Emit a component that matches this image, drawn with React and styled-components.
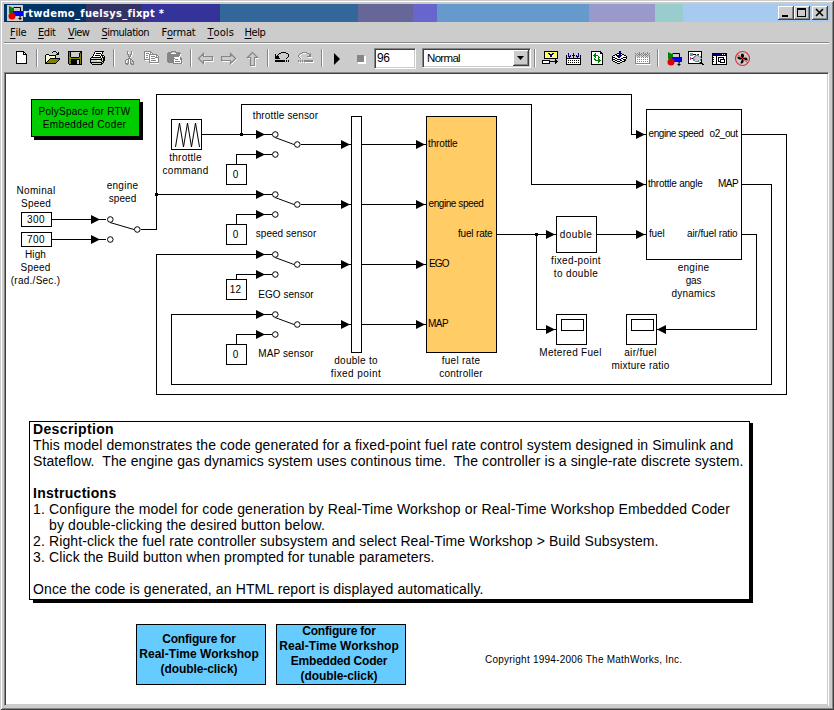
import React from "react";
import styled, { createGlobalStyle, css } from "styled-components";

const SANS = '"Liberation Sans", Arial, sans-serif';
const UI = '"DejaVu Sans Condensed", "DejaVu Sans", sans-serif';

const GlobalStyle = createGlobalStyle`
  html, body { margin: 0; padding: 0; background: #ccc; }
  body { width: 834px; height: 710px; overflow: hidden; color: #000; }
  * { box-sizing: border-box; }
`;

/* Letter spacing that makes a line of text take the given width. */
const ruler = document.createElement("canvas").getContext("2d");
function tracking(text, font, width) {
  if (!width) return 0;
  ruler.font = font;
  return (width - ruler.measureText(text).width) / text.length;
}

const Glyphs = styled.span`
  display: block;
  white-space: pre;
  font: ${(p) => p.$font};
  line-height: inherit;
  letter-spacing: ${(p) => p.$track}px;
`;

function Line({ children, w, size = 10, bold, family = SANS }) {
  const font = `${bold ? "bold " : ""}${size}px ${family}`;
  return (
    <Glyphs $font={font} $track={tracking(children, font, w)}>
      {children}
    </Glyphs>
  );
}

/* ---------- window frame ---------- */

const Window = styled.div`
  width: 834px;
  height: 710px;
  display: flex;
  flex-direction: column;
  background: #ccc;
  padding: 2px;
  box-shadow: inset 1px 1px #ccc, inset -1px -1px #404040, inset 2px 2px #fff, inset -2px -2px #868686;
`;

const TitleBar = styled.header`
  height: 18px;
  margin: 2px 2px 0 2px;
  display: flex;
  align-items: center;
  padding: 0 2px 0 3px;
  background: linear-gradient(
    90deg,
    #003366 0 82px,
    #333366 82px 138px,
    #333399 138px 216px,
    #336699 216px 354px,
    #666699 354px 409px,
    #6666cc 409px 433px,
    #6699cc 433px 585px,
    #9999cc 585px 651px,
    #99cccc 651px 679px,
    #a6caf0 679px
  );
`;

const Title = styled.h1`
  flex: 1;
  margin: 1px 0 0;
  color: #fff;
  line-height: 16px;
`;

const WinButton = styled.button`
  width: 16px;
  height: 14px;
  padding: 0;
  border: 0;
  margin-left: ${(p) => (p.$gap ? 2 : 0)}px;
  background: #ccc;
  box-shadow: inset -1px -1px #404040, inset 1px 1px #fff, inset -2px -2px #868686;
  display: flex;
`;

const MenuBar = styled.nav`
  height: 20px;
  display: flex;
  gap: 12.5px;
  padding: 4px 0 0 8px;
  line-height: 14px;
`;

const MenuItem = styled.span`
  display: flex;
  width: ${(p) => p.$w}px;
  font: 11px ${UI};
  line-height: 14px;
  white-space: pre;
  letter-spacing: ${(p) => p.$track}px;
  u { text-underline-offset: 2px; text-decoration-thickness: 1px; }
`;

const ToolBar = styled.div`
  height: 30px;
  margin: 0 3px 0 2px;
  border-top: 1px solid #868686;
  box-shadow: inset 0 1px #fff;
  padding: 6px 0 0 6px;
  display: flex;
`;

const Slot = styled.svg`
  width: 23px;
  height: 20px;
  flex: none;
  display: block;
`;

const Separator = styled.div`
  width: 2px;
  height: 18px;
  margin: 0 3px;
  flex: none;
  border-left: 1px solid #868686;
  border-right: 1px solid #fff;
`;

const sunken = css`
  background: #fff;
  border: 1px solid;
  border-color: #868686 #fff #fff #868686;
  box-shadow: inset 1px 1px #404040, inset -1px -1px #ccc;
`;

const Field = styled.div`
  ${sunken}
  width: 42px;
  height: 21px;
  margin: -1px 6px 0 2px;
  padding: 2px 0 0 2px;
  line-height: 14px;
`;

const Select = styled.div`
  ${sunken}
  width: 109px;
  height: 20px;
  margin-top: -1px;
  padding: 1px 1px 1px 4px;
  display: flex;
  justify-content: space-between;
  line-height: 17px;
`;

const DropButton = styled.svg`
  width: 16px;
  height: 16px;
  background: #ccc;
  box-shadow: inset -1px -1px #404040, inset 1px 1px #fff, inset -2px -2px #868686;
`;

/* ---------- model canvas ---------- */

const Canvas = styled.main`
  position: relative;
  flex: 1;
  margin: 0 3px 2px 2px;
  background: #fff;
  border: 1px solid;
  border-color: #868686 #fff #ccc #868686;
  box-shadow: inset 1px 1px #404040, inset -1px -1px #ccc;
`;

/* Model coordinates are those of the window. */
const Model = styled.div`
  position: absolute;
  left: -5px;
  top: -73px;
  width: 834px;
  height: 710px;
`;

const Wires = styled.svg`
  position: absolute;
  left: 0;
  top: 0;
  width: 834px;
  height: 710px;
  fill: none;
  stroke: #000;
`;

const Block = styled.div`
  position: absolute;
  left: ${(p) => p.$x}px;
  top: ${(p) => p.$y}px;
  width: ${(p) => p.$w}px;
  height: ${(p) => p.$h}px;
  border: 1px solid #000;
  background: ${(p) => p.$fill || "#fff"};
  display: flex;
  flex-direction: column;
  align-items: center;
  justify-content: center;
  padding-right: ${(p) => p.$inset || 0}px;
  padding-bottom: ${(p) => p.$lift || 0}px;
  line-height: ${(p) => p.$leading || 13}px;
  ${(p) => p.$shadow && css`box-shadow: 3px 3px #000;`}
`;

const BlockIcon = styled.svg`
  width: 28px;
  height: 28px;
  display: block;
`;

const Label = styled.div`
  position: absolute;
  left: ${(p) => p.$x}px;
  top: ${(p) => p.$base - 10}px;
  transform: ${(p) => (p.$centered ? "translateX(-50%)" : "none")};
  line-height: 13px;
  display: flex;
  flex-direction: column;
  align-items: center;
`;

const Note = styled.section`
  position: absolute;
  left: 29px;
  top: 421px;
  width: 721px;
  height: 179px;
  border: 1px solid #000;
  background: #fff;
  line-height: 16px;
  &::before {
    content: "";
    position: absolute;
    z-index: -1;
    left: 3px;
    top: 1px;
    width: 720px;
    height: 180px;
    background: #000;
  }
`;

const NoteText = styled.div`
  margin-top: -1px;
  height: 178px;
  padding-left: 3px;
`;

const NoteFace = styled.div`
  position: absolute;
  z-index: -1;
  inset: 0;
  background: #fff;
`;

const NoteLayer = styled.div`
  position: relative;
  z-index: 0;
`;

const Blank = styled.div`
  height: 16px;
`;

const Step = styled.div`
  display: grid;
  grid-template-columns: 16px auto;
`;

/* ---------- toolbar drawings ---------- */

const COLORS = {
  k: "#000", w: "#fff", g: "#868686", y: "#ffff66", o: "#808000", b: "#000080",
  B: "#0000ff", G: "#008000", r: "#ff0000", c: "#ccc", m: "#ff00ff", t: "#669999", l: "#ffffcc",
};

function Pixels({ rows, x, y }) {
  const paths = {};
  rows.forEach((row, j) => {
    let i = 0;
    while (i < row.length) {
      const ch = row[i];
      let n = 1;
      while (row[i + n] === ch) n += 1;
      if (ch !== ".") paths[ch] = `${paths[ch] || ""}M${x + i} ${y + j}h${n}v1h-${n}z`;
      i += n;
    }
  });
  return Object.keys(paths).map((ch) => <path key={ch} fill={COLORS[ch]} d={paths[ch]} />);
}

const ART = {
  new: [6, 2, [
    "kkkkkkkk...", "kwwwwwwkk..", "kwwwwwwkwk.", "kwwwwwwkkkk", "kwwwwwwwwwk", "kwwwwwwwwwk", "kwwwwwwwwwk",
    "kwwwwwwwwwk", "kwwwwwwwwwk", "kwwwwwwwwwk", "kwwwwwwwwwk", "kwwwwwwwwwk", "kkkkkkkkkkk"]],
  open: [3, 2, [
    ".........kkk....", "........k...k.k.", ".............kk.", "..kkk.......kkk.", ".kylykkkkkkk....", ".klylylylylk....",
    ".kylylylylyk....", ".klylykkkkkkkkkk", ".kylykoooooooook", ".klykoooooooook.", ".kykoooooooook..",
    ".kkoooooooook...", ".kkkkkkkkkkk...."]],
  save: [4, 2, [
    "kkkkkkkkkkkkkk", "kokccccccccckk", "kokcccccccckok", "kokcccccccckok", "kokcccccccckok", "kokcccccccckok", "kookkkkkkkkook",
    "kooooooooooook", "kookkkkkkkkkok", "kookkkkkkcckok", "kookkkkkkcckok", "kookkkkkkcckok", "kookkkkkkcckok", ".kkkkkkkkkkkkk"]],
  print: [3, 2, [
    ".....kkkkkkkkk.", "....kwwwwwwwk..", "....kwkkkkkwk..", "...kwwwwwwwk...", "...kwkkkkkwkkk.", "..kwwwwwwwkwkwk", ".kkkkkkkkkkwkkk",
    "kcccccccccckckk", "kkkkkkkkkkkkckk", "kccccccyyyckckk", "kccccccccccckk.", "kkkkkkkkkkkkck.", ".kccccccccckk..", "..kkkkkkkkkk..."]],
  cut: [7, 2, [
    "..g...g..", "..gw..gw.", "..gw..gw.", "..gg.ggw.", "...g.gw..", "...gggw..", "....gw...", "...ggg...",
    ".gggwgg..", "g.wgwg.g.", "gw.gwg.gg", "gw.gwg..g", "ggggwgg.g", ".gg...ggg"]],
  copy: [3, 2, [
    "ggggggg........", "gwwwwwgg.......", "gwgggwgwg......", "gwwwwgggggggg..", "gwggwgwwwwwwgg.", "gwwwwgwggggwgwg", "gwggwgwwwwwgggg",
    "gwwwwgwggggwwwg", "ggggggwwwwwwwwg", ".wwwwgwgggggwwg", ".....gwwwwwwwwg", ".....gggggggggg", "......wwwwwwwww"]],
  paste: [3, 2, [
    "....ggggg......", ".gggg...ggggg..", "ggggwwwwwggggg.", "gggggggggggggw.", "gggggggggggggw.", "ggggggggggggw..", "gggggggwwwwwwg.",
    "ggggggggwwwwwgg", "gggggggwgggwwgg", "gggggggwwwwwwwg", "gggggggwgggggwg", ".ggggggwwwwwwwg", "......gggggggggw"]],
  undo: [3, 3, [
    "......kkkkk...", "....kk.....kk.", "k..k.........k", "k.k..........k", "kkkk.........k", "kkkk........k.", "kkkkk......k..", "..............", "kkkkkkkkkk.k.k", "kkkkkkkkkk.k.k"]],
  redo: [3, 3, [
    "....ggggg......", "..gg.www.gg.g..", ".g.w.......gg..", "g.w........gg..", "gw.......gggg..", ".gw.......wwww.", "..gw...........", "...............", "g.g.g.ggggggggg", "g.g.g.gggggggggw", ".w.w.w.wwwwwwwww"]],
  library: [3, 2, [
    "..kkkkkkkkkkkkkk", "..kyyyyyyyyyyyyk", "..kyyybbyybbyyyk", "..kyyyybbbbyyyyk", "..kyyyyybbyyyyyk", "..kyyyyybbyyyyyk", "..kyyyyyyyyyyyyk",
    "..kkkkkkkkkkkkkk", ".............k..", "kkkkkkkk.....kk.", "kwwwwwwkkkkkkkkk", "kwwwwwwk.....kk.", "kkkkkkkk.....k.."]],
  build: [4, 4, [
    "..b....b....b..", "..b....b....b..", "k.b.b.bbb.b.b.k", "k.bbb..b..bbb.k", "k..b...b...b..k", "kkkkkkkkkkkkkkk", "kwwwwwwwwwwwwwk",
    "kwkwkwkwkwkwkwk", "kwwwwwwwwwwwwwk", "kwkwkwkwkwkwkwk", "kwwwwwwwwwwwwwk", "kkkkkkkkkkkkkkk"]],
  buildOff: [4, 3, [
    "c.c.g.c.g.c.g.c", "g.g.g.g.g.g.g.g", ".g.ggg.g.ggg.g.", "g.g.g.g.g.g.g.g", "g..g...g...g..g", "gwgwgwgwgwgwgwg", "gwwwwwwwwwwwwwg",
    "gwgwgwgwgwgwgwg", "gwwwwwwwwwwwwwg", "gwgwgwgwgwgwgwg", "gwwwwwwwwwwwwwg", "ggggggggggggggg", ".wwwwwwwwwwwwwww"]],
  refresh: [6, 2, [
    "kkkkkkkkkk..", "kwwwwwwwwkk.", "kwwwGwwwwkkk", "kwwGGwwwwwwk", "kwGGGGGwwwwk", "kwwGGwwGwwwk", "kwwwGwwGGwwk", "kwwGwwwGwwwk",
    "kwwGGwwGGwwk", "kwwwGGGGGGwk", "kwwwwwwGGwwk", "kwwwwwwGwwwk", "kwwwwwwwwwwk", "kkkkkkkkkkkk"]],
  stack: [4, 2, [
    ".......bb......", ".......bb......", ".....kkbbk.....", "...kkwwbbwkk...", ".kkwbbbbbbwwkk.", "kwwwwbbbbwwwwwk", "kkkwwwbbwwwkkkk",
    "kwwkkwwwwkkwwwk", "kkkwwkkkkwwkkk.", "kwwkkwwwkkwwkk.", ".kkwwkkkwwkkk..", "...kkwwwkk.....", ".....kkk......."]],
  explorer: [3, 2, [
    "kkkkkkkkkkkkkk..", "kwwwwwwwwwwwwk..", "kwtttwwwwwwwwk..", "kwtttkkkwGkwwk..", "kwtttwwggggwwk..", "kwwwwwgtcctcgk..", "kwmwwgtcccccgk..",
    "kwmmkgcccccccg..", "kwmwwgtcccccgk..", "kwwwwgtccctcgk..", "kwwwwwwggggwwk..", "kwwwwwwwwwwgkk..", "kkkkkkkkkkkkkkk.", "..............kk"]],
  browser: [4, 4, [
    "kkkkkkkkkkkkkkk", "kbbbbbbbbbwbwbk", "kkkkkkkkkkkkkkk", "kwwwkwwwwwwwwwk", "kkwwkwkkkkkkwwk", "kwwwkwkwwwwkwwk", "kkwwkwkwkkkkkwk",
    "kwwwkwkwkwwwkwk", "kkwwkwkkkwwwkwk", "kwwwkwwwkkkkkwk", "kwwwkwwwwwwwwwk", "kkkkkkkkkkkkkkk"]],
};

function Art({ name }) {
  const [x, y, rows] = ART[name];
  return (
    <Slot viewBox="0 0 23 20" shapeRendering="crispEdges">
      <Pixels x={x} y={y} rows={rows} />
    </Slot>
  );
}

const ARROWS = {
  back: "M3.500 9.500L8.500 4.500V7.500H17.500V11.500H8.500V14.500Z",
  forward: "M17.500 9.500L12.500 4.500V7.500H3.500V11.500H12.500V14.500Z",
  up: "M11.500 3.500L6.500 8.500H9.500V16.500H13.500V8.500H16.500Z",
};

function HollowArrow({ dir }) {
  return (
    <Slot viewBox="0 0 23 20" fill="none">
      <path d={ARROWS[dir]} stroke="#fff" transform="translate(1 1)" />
      <path d={ARROWS[dir]} stroke="#868686" strokeWidth="1.200" fill="#ccc" />
    </Slot>
  );
}

function ModelMark() {
  return (
    <g>
      <path d="M2 1l4 2h1v5H2z" fill="#008000" />
      <path d="M6.500 2.500h7v9" fill="none" stroke="#000" />
      <path d="M6 6h10v5H6z" fill="#0000ff" />
      <circle cx="5" cy="11" r="3.500" fill="#e00000" />
      <path d="M13 11v4M11.500 13.500h3" stroke="#000" fill="none" />
    </g>
  );
}

const AppIcon = styled.svg`
  width: 16px;
  height: 16px;
  background: #ccc;
  flex: none;
`;

const MENUS = [
  ["File", 0, 15.5], ["Edit", 0, 17.5], ["View", 0, 21], ["Simulation", 0, 47.5],
  ["Format", 1, 33.5], ["Tools", 0, 24.5], ["Help", 0, 21],
];

function Menu({ text, mnemonic, w }) {
  return (
    <MenuItem $w={w} $track={tracking(text, `11px ${UI}`, w)}>
      {text.slice(0, mnemonic)}
      <u>{text[mnemonic]}</u>
      {text.slice(mnemonic + 1)}
    </MenuItem>
  );
}

function Tools() {
  return (
    <ToolBar>
      <Art name="new" />
      <Separator />
      <Art name="open" />
      <Art name="save" />
      <Art name="print" />
      <Separator />
      <Art name="cut" />
      <Art name="copy" />
      <Art name="paste" />
      <Separator />
      <HollowArrow dir="back" />
      <HollowArrow dir="forward" />
      <HollowArrow dir="up" />
      <Separator />
      <Art name="undo" />
      <Art name="redo" />
      <Separator />
      <Slot viewBox="0 0 23 20"><path d="M8 4v12l6-6z" /></Slot>
      <Slot viewBox="0 0 23 20">
        <path d="M9 7h8v8H9z" fill="#fff" />
        <path d="M8 6h7v7H8z" fill="#868686" />
      </Slot>
      <Field><Line size={12} w={12.5}>96</Line></Field>
      <Select>
        <Line size={11.5} w={33}>Normal</Line>
        <DropButton viewBox="0 0 16 16"><path d="M4 6h7l-3.500 4z" /></DropButton>
      </Select>
      <Separator />
      <Art name="library" />
      <Art name="build" />
      <Art name="refresh" />
      <Art name="stack" />
      <Art name="buildOff" />
      <Separator />
      <Slot viewBox="-4 -2 23 20"><ModelMark /></Slot>
      <Art name="explorer" />
      <Art name="browser" />
      <Slot viewBox="0 0 23 20">
        <path d="M11 4.500c2.500 0 2.500 3 1 4.500c3-1.500 5 0 4.500 2.500c-1.500 0-3.500-1.500-4.500-1.500c1.500 2.500 0 5-2.500 4.500c0-1.500 1.500-3.500 1.500-4.500c-2.500 1.500-5 0-4.500-2.500c1.500 0 3.500 1.500 4.500 1.500c-1.500-1.500-1.500-4 0-4.500z" />
        <circle cx="11.500" cy="9.500" r="7" fill="none" stroke="#e83030" strokeWidth="1.200" />
        <path d="M6 5l11 9" stroke="#e83030" strokeWidth="1" />
      </Slot>
    </ToolBar>
  );
}

/* ---------- model data ---------- */

const SWITCH_ROWS = [134, 194, 254, 314];
const CONSTANTS = [
  [164, "0", 5], [224, "0", 5], [279, "12", 11], [344, "0", 5],
];

const WIRES = [
  "M52 219.500H106M52 239.500H106M141 229.500H156.500V94.500H631.500V134.500H646",
  "M156.500 194.500H256M202 134.500H256M241.500 134.500V104.500H531.500V184.500H646",
  "M497 234.500H556M536.500 234.500V329.500H556M597 234.500H646",
  "M742 134.500H786.500V394.500H156.500V254.500H256",
  "M742 184.500H771.500V384.500H171.500V314.500H256",
  "M742 234.500H756.500V329.500H657",
  ...SWITCH_ROWS.map((y, i) =>
    `M256 ${y + 0.5}H272M236.500 ${CONSTANTS[i][0]}V${y + 20.5}H272M301 ${y + 10.5}H351M362 ${y + 10.5}H426`),
];

const HEADS = [
  [100, 219], [100, 239], [645, 134], [645, 184], [645, 234], [555, 234], [555, 329],
  ...SWITCH_ROWS.flatMap((y) => [[265, y], [265, y + 20], [350, y + 10], [425, y + 10]]),
];

const SWITCHES = [[275, 134, 22], [275, 194, 22], [275, 254, 22], [275, 314, 22], [110, 219, 27]];
const JUNCTIONS = [[156, 194], [241, 134], [536, 234]];

const LABELS = [
  [285.5, 119, ["throttle sensor", 65.5]],
  [185.5, 161, ["throttle", 32.5], ["command", 46]],
  [122.5, 189, ["engine", 31.5], ["speed", 27.5]],
  [36, 194, ["Nominal", 39], ["Speed", 30]],
  [35.5, 258, ["High", 21], ["Speed", 30], ["(rad./Sec.)", 49.5]],
  [286, 237, ["speed sensor", 60.5]],
  [286, 298, ["EGO sensor", 55.5]],
  [286, 357, ["MAP sensor", 55.5]],
  [356, 364, ["double to", 43.5], ["fixed point", 50.5]],
  [461, 364, ["fuel rate", 38.5], ["controller", 43.5]],
  [576, 264, ["fixed-point", 50], ["to double", 44.5]],
  [570.5, 356, ["Metered Fuel", 62.5]],
  [640.5, 356, ["air/fuel", 32.5], ["mixture ratio", 58]],
  [693.5, 271, ["engine", 31.5], ["gas", 15.5], ["dynamics", 44]],
];

const PORTS = [
  [428, 147, "throttle", 29.5], [428.5, 207, "engine speed", 55], [458, 237, "fuel rate", 34.5],
  [429, 267, "EGO", 19.5], [428, 327, "MAP", 20],
  [648.5, 137, "engine speed", 55], [709.5, 137, "o2_out", 28], [648, 187, "throttle angle", 54.5],
  [718, 187, "MAP", 20], [649, 237, "fuel", 15.5], [687, 237, "air/fuel ratio", 50.5],
  [485, 663, "Copyright 1994-2006 The MathWorks, Inc.", 197.5],
];

function Scope() {
  return (
    <BlockIcon viewBox="0 0 28 28" fill="none" stroke="#000" shapeRendering="crispEdges">
      <rect x="3.500" y="3.500" width="22" height="11" />
    </BlockIcon>
  );
}

function ModelWires() {
  return (
    <Wires viewBox="0 0 834 710">
      <g shapeRendering="crispEdges">
        {WIRES.map((d) => <path key={d} d={d} />)}
      </g>
      {HEADS.map(([x, y]) => (
        <path key={`${x}-${y}`} fill="#000" stroke="none" d={`M${x} ${y + 0.5}l-9-4.500v9z`} />
      ))}
      <path fill="#000" stroke="none" d="M657 329.500l9-4.500v9z" />
      {JUNCTIONS.map(([x, y]) => (
        <rect key={x} x={x - 1} y={y - 1} width="3" height="3" fill="#000" stroke="none" />
      ))}
      {SWITCHES.map(([x, y, dx]) => (
        <g key={`${x}-${y}`}>
          <path d={`M${x} ${y + 3.5}L${x + dx - 3} ${y + 10.5}`} />
          {[[x, y], [x, y + 20], [x + dx, y + 10]].map(([cx, cy]) => (
            <circle key={`${cx}-${cy}`} cx={cx + 0.3} cy={cy + 0.5} r="2.800" fill="#fff" />
          ))}
        </g>
      ))}
    </Wires>
  );
}

function Blocks() {
  return (
    <>
      <Block $x={31} $y={99} $w={109} $h={38} $fill="#00cc00" $shadow $inset={2} $lift={1}>
        <Line w={92}>PolySpace for RTW</Line>
        <Line w={83.5}>Embedded Coder</Line>
      </Block>
      <Block $x={171} $y={119} $w={31} $h={31}>
        <BlockIcon viewBox="0 0 28 28" fill="none" stroke="#000">
          <path d="M2.500 26L6.500 2L10.500 26L14.500 2L18.500 26L22.500 2L26.500 26" />
        </BlockIcon>
      </Block>
      <Block $x={21} $y={212} $w={31} $h={15} $inset={1}><Line w={18}>300</Line></Block>
      <Block $x={21} $y={232} $w={31} $h={15} $inset={1}><Line w={18}>700</Line></Block>
      {CONSTANTS.map(([y, text, w]) => (
        <Block key={y} $x={226} $y={y} $w={21} $h={21} $inset={2} $lift={1}><Line w={w + 0.5}>{text}</Line></Block>
      ))}
      <Block $x={351} $y={116} $w={11} $h={237} />
      <Block $x={426} $y={116} $w={71} $h={237} $fill="#ffcc66" />
      <Block $x={556} $y={216} $w={41} $h={37} $inset={1} $lift={1}><Line w={32.5}>double</Line></Block>
      <Block $x={556} $y={314} $w={31} $h={31}><Scope /></Block>
      <Block $x={626} $y={314} $w={31} $h={31}><Scope /></Block>
      <Block $x={646} $y={109} $w={96} $h={151} />
      <Block $x={136} $y={624} $w={130} $h={61} $fill="#66ccff" $inset={4} $lift={1} $leading={15}>
        <Line bold size={12} w={73.5}>Configure for</Line>
        <Line bold size={12} w={119.5}>Real-Time Workshop</Line>
        <Line bold size={12} w={77}>(double-click)</Line>
      </Block>
      <Block $x={276} $y={624} $w={130} $h={61} $fill="#66ccff" $inset={4} $lift={1} $leading={15}>
        <Line bold size={12} w={73.5}>Configure for</Line>
        <Line bold size={12} w={119.5}>Real-Time Workshop</Line>
        <Line bold size={12} w={96.5}>Embedded Coder</Line>
        <Line bold size={12} w={77}>(double-click)</Line>
      </Block>
    </>
  );
}

function Description() {
  return (
    <NoteLayer>
      <Note>
        <NoteFace />
        <NoteText>
          <Line bold size={14} w={81}>Description</Line>
          <Line size={14} w={700.5}>This model demonstrates the code generated for a fixed-point fuel rate control system designed in Simulink and</Line>
          <Line size={14} w={711}>{"Stateflow.  The engine gas dynamics system uses continous time.  The controller is a single-rate discrete system."}</Line>
          <Blank />
          <Line bold size={14} w={83.5}>Instructions</Line>
          <Step>
            <Line size={14} w={12}>1.</Line>
            <div>
              <Line size={14} w={681}>Configure the model for code generation by Real-Time Workshop or Real-Time Workshop Embedded Coder</Line>
              <Line size={14} w={276}>by double-clicking the desired button below.</Line>
            </div>
          </Step>
          <Step>
            <Line size={14} w={12}>2.</Line>
            <Line size={14} w={609.5}>{"Right-click the fuel rate controller subsystem and select Real-Time Workshop > Build Subsystem."}</Line>
          </Step>
          <Step>
            <Line size={14} w={12}>3.</Line>
            <Line size={14} w={385.5}>Click the Build button when prompted for tunable parameters.</Line>
          </Step>
          <Blank />
          <Line size={14} w={451}>Once the code is generated, an HTML report is displayed automatically.</Line>
        </NoteText>
      </Note>
    </NoteLayer>
  );
}

export default function App() {
  return (
    <>
      <GlobalStyle />
      <Window>
        <TitleBar>
          <AppIcon viewBox="0 0 16 16"><ModelMark /></AppIcon>
          <Title><Line bold size={11} family={UI} w={141}>rtwdemo_fuelsys_fixpt *</Line></Title>
          <WinButton><svg width="16" height="14"><path d="M4 9h6v2H4z" /></svg></WinButton>
          <WinButton>
            <svg width="16" height="14" shapeRendering="crispEdges">
              <path d="M3 2h9v9H3zM4 4v6h7V4z" fillRule="evenodd" />
            </svg>
          </WinButton>
          <WinButton $gap>
            <svg width="16" height="14"><path d="M4 3l7 7M11 3l-7 7" stroke="#000" strokeWidth="1.600" /></svg>
          </WinButton>
        </TitleBar>
        <MenuBar>
          {MENUS.map(([text, k, w]) => <Menu key={text} text={text} mnemonic={k} w={w} />)}
        </MenuBar>
        <Tools />
        <Canvas>
          <Model>
            <ModelWires />
            <Blocks />
            {LABELS.map(([x, base, ...lines]) => (
              <Label key={`${x}-${base}`} $x={x} $base={base} $centered>
                {lines.map(([text, w]) => <Line key={text} w={w}>{text}</Line>)}
              </Label>
            ))}
            {PORTS.map(([x, base, text, w]) => (
              <Label key={`${x}-${base}`} $x={x} $base={base}><Line w={w}>{text}</Line></Label>
            ))}
            <Description />
          </Model>
        </Canvas>
      </Window>
    </>
  );
}
